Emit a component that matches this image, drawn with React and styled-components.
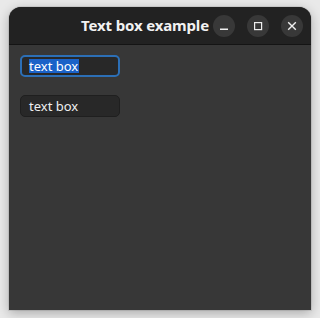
import React from "react";
import styled, { createGlobalStyle } from "styled-components";

const Global = createGlobalStyle`
  html, body { margin: 0; padding: 0; background: #e9e9e9; }
  body { font-family: "Noto Sans", "DejaVu Sans", sans-serif; }
  #root { width: 320px; height: 318px; }
`;

const Stage = styled.div`
  width: 320px;
  height: 318px;
  padding: 7px 9px 8px 9px;
  box-sizing: border-box;
  display: flex;
`;

const Window = styled.div`
  flex: 1;
  display: flex;
  flex-direction: column;
  background: #373737;
  border-radius: 12px 12px 0 0;
  overflow: hidden;
  box-shadow: 0 3px 12px rgba(0, 0, 0, 0.28), 0 0 0 1px rgba(0, 0, 0, 0.08);
`;

const HeaderBar = styled.div`
  height: 37px;
  flex: none;
  background: #222222;
  border-bottom: 1px solid #141414;
  display: flex;
  align-items: center;
  padding: 0 8px 0 0;
`;

const Title = styled.div`
  flex: 1;
  text-align: right;
  padding-right: 4px;
  color: #f2f2f2;
  font-weight: 700;
  font-size: 15px;
  letter-spacing: -0.15px;
  margin-top: -1px;
`;

const Controls = styled.div`
  display: flex;
  gap: 12px;
  align-items: center;
`;

const CtlButton = styled.div`
  width: 22px;
  height: 22px;
  border-radius: 50%;
  background: #383838;
  display: flex;
  align-items: center;
  justify-content: center;
`;

const Content = styled.div`
  flex: 1;
  padding: 10px 11px;
  display: flex;
  flex-direction: column;
  gap: 18px;
  align-items: flex-start;
`;

const Entry = styled.div`
  width: 100px;
  height: 22px;
  box-sizing: border-box;
  border-radius: 5px;
  background: #282828;
  border: ${(p) => (p.$focused ? "2px solid #2c6fb6" : "1px solid #1f1f1f")};
  padding-left: ${(p) => (p.$focused ? "7px" : "8px")};
  display: flex;
  align-items: center;
  color: #eeeeee;
  font-size: 13px;
`;

const Selected = styled.span`
  background: #1a62c8;
  color: #ffffff;
  line-height: 14px;
  padding: 0 1px 0 0;
`;

export default function App() {
  return (
    <>
      <Global />
      <Stage>
        <Window>
          <HeaderBar>
            <Title>Text box example</Title>
            <Controls>
              <CtlButton>
                <svg width="10" height="10" viewBox="0 0 10 10">
                  <rect x="1" y="7.5" width="8" height="1.5" fill="#f0f0f0" />
                </svg>
              </CtlButton>
              <CtlButton>
                <svg width="10" height="10" viewBox="0 0 10 10">
                  <rect x="1.6" y="1.6" width="7" height="7" fill="none" stroke="#eee" strokeWidth="1.2" />
                </svg>
              </CtlButton>
              <CtlButton>
                <svg width="10" height="10" viewBox="0 0 10 10">
                  <path d="M1.2 1.2 L8.8 8.8 M8.8 1.2 L1.2 8.8" stroke="#eee" strokeWidth="1.4" />
                </svg>
              </CtlButton>
            </Controls>
          </HeaderBar>
          <Content>
            <Entry $focused>
              <Selected>text box</Selected>
            </Entry>
            <Entry>text box</Entry>
          </Content>
        </Window>
      </Stage>
    </>
  );
}
